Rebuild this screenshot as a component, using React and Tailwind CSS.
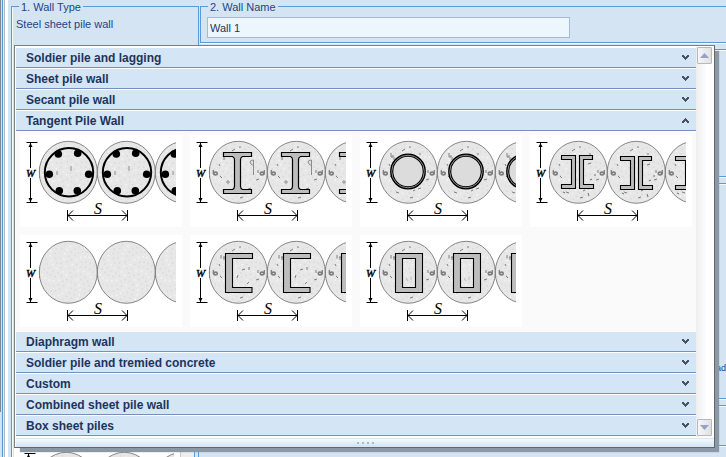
import React from "react";

const SHIFTS = [0, 58, 116];

// Light and dark grains scattered through the concrete.
const GRAINS = Array.from({ length: 110 }, (_, i) => {
  const angle = i * 2.39996;
  const reach = Math.sqrt((i + 0.5) / 110);
  return {
    x: 48 + Math.cos(angle) * reach * 27,
    y: 37 + Math.sin(angle) * reach * 29,
    fill: i % 3 === 0 ? "#d9d9d9" : i % 3 === 1 ? "#f5f5f5" : "#dedbd9",
  };
});

const CHIPS = [
  "M50 13v-2", "M42 16l3-2", "M60 18v2", "M34 22v3", "M66 45l3-1", "M30 41l2 2",
  "M50 63l3-1", "M36 57l3 1", "M58 54l3-1", "M68 35v3", "M29 29l1 2", "M53 56l2-1",
];

function Aggregate() {
  return (
    <g fill="none" stroke="#7d7d7d">
      <path d={CHIPS.join("")} />
      <ellipse cx="25.5" cy="38.5" rx="1.8" ry="1.4" strokeWidth="1.6" />
      <path d="M23.3 35v4.5" strokeWidth="1.3" />
      <ellipse cx="72" cy="38.5" rx="1.8" ry="1.4" strokeWidth="1.6" />
      <path d="M74.3 35v4.5" strokeWidth="1.3" />
    </g>
  );
}

function Rebar() {
  const bars = [[38.3, 19], [57.7, 18.3], [29.3, 39.3], [68.7, 39.3], [39.3, 55.7], [57.3, 55.7]];
  return (
    <g>
      <circle cx="49" cy="37.3" r="24.2" fill="none" stroke="#000" strokeWidth="2" />
      {bars.map(([x, y]) => (
        <circle key={x + "-" + y} cx={x} cy={y} r="3.8" />
      ))}
      <path d="M51 31v5M37 36v4" stroke="#8f8f8f" />
    </g>
  );
}

function Beam() {
  return (
    <g>
      <path
        d="M33.5 17.5h28v4h-9q-2 1-2 3v27q0 2 2 3h9v4h-28v-4h9q2-1 2-3v-27q0-2-2-3h-9z"
        fill="#bdbdbd"
        stroke="#000"
        strokeWidth="1.2"
      />
      <path d="M64 31q-4-2-4-4q0-2 3.5-2v15" fill="none" stroke="#8a8a8a" />
      <circle cx="38" cy="47" r="1.2" fill="none" stroke="#8a8a8a" />
    </g>
  );
}

function Pipe() {
  return (
    <g>
      <circle cx="48" cy="36.5" r="16.3" fill="#dcdcdc" stroke="#000" strokeWidth="3.2" />
      <circle cx="48" cy="36.5" r="16.3" fill="none" stroke="#8c8c8c" />
      <path d="M31 18v4h2v-2" fill="none" stroke="#7d7d7d" />
    </g>
  );
}

function Channel() {
  return (
    <g>
      <path d="M31 20v3.5M34 23v-2" stroke="#7d7d7d" />
      <path d="M35.5 18.5h27v5h-20v29h19.5v5h-26.5z" fill="#bdbdbd" stroke="#000" strokeWidth="1.1" />
      <path d="M52 35l3-1M59 32v3M47 43l1-3M57 49l2-2" stroke="#7d7d7d" />
    </g>
  );
}

function Box() {
  return (
    <g>
      <path d="M31 20v3.5M34 23v-2" stroke="#7d7d7d" />
      <path d="M35.5 18.5h27v39h-27zM42.5 23.5v29h13v-29z" fill="#bdbdbd" stroke="#000" strokeWidth="1.1" />
      <path d="M46 43l2 3M51 42v3" stroke="#bbb" />
    </g>
  );
}

function ChannelPair({ index }) {
  const drop = index === 0 ? 0 : 1;
  return (
    <g transform={`translate(${index === 2 ? -2 : drop} ${drop})`} fill="#bdbdbd" stroke="#000" strokeWidth="1.1">
      <path d="M31.5 20.5h14v33h-14v-4h10v-25h-10z" />
      <path d="M49.5 20.5h13v4h-9v25h10v4h-14z" />
      <path d="M58 29l3-1M60 45l2-1M33 57l2 1M58 58l1 3M65 39v2" fill="none" stroke="#7d7d7d" />
    </g>
  );
}

const SHAPES = { rebar: Rebar, beam: Beam, pipe: Pipe, pair: ChannelPair, channel: Channel, box: Box };

function PileDrawing({ kind, captions = true }) {
  const Shape = SHAPES[kind];
  return (
    <svg viewBox="0 0 162 92" className="block h-[92px] w-[162px] bg-white" role="img" aria-label={`${kind} pile section`}>
      <svg x="0" y="0" width="156" height="92" viewBox="0 0 156 92">
        {SHIFTS.map((shift, index) => (
          <g key={shift} transform={`translate(${shift} 0)`}>
            <ellipse cx="48.3" cy="37.3" rx="29" ry="31" fill="#e7e7e7" />
            {GRAINS.map((g, i) => (
              <rect key={i} x={g.x} y={g.y} width="1.5" height="1.5" fill={g.fill} />
            ))}
            <ellipse cx="48.3" cy="37.3" rx="29" ry="31" fill="none" stroke="#858585" />
            <path d="M19.5 32v11M77.5 32v11" stroke="#858585" />
            {Shape && kind !== "rebar" && <Aggregate />}
            {Shape && <Shape index={index} />}
          </g>
        ))}
      </svg>
      <g fill="none" stroke="#000">
        <path d="M6.5 7.5h11M6.5 67.5h11M10.5 8v25M10.5 43v24" />
        <path d="M47.5 75v11M107.5 75v11M48 80.5h59M53 75.5l-5 5l5 5M102 75.5l5 5l-5 5" />
      </g>
      <path d="M10.5 8l2 4h-4zM10.5 67l2-4h-4z" />
      {captions && (
        <g className="font-['Liberation_Serif',serif] italic">
          <text x="6" y="42" fontSize="11" stroke="#000" strokeWidth="0.4">W</text>
          <text x="74" y="79" fontSize="16">S</text>
        </g>
      )}
    </svg>
  );
}

function Chevron({ up }) {
  return (
    <svg viewBox="0 0 7 5" className="h-[5px] w-[7px]" shapeRendering="crispEdges" aria-hidden="true">
      <path
        d="M0 0h2v1h1v1h1v-1h1v-1h2v2h-1v1h-1v1h-1v1h-1v-1h-1v-1h-1v-1h-1z"
        fill="#4b5360"
        transform={up ? "matrix(1 0 0 -1 0 5)" : undefined}
      />
    </svg>
  );
}

function SectionHeader({ title, open = false }) {
  return (
    <button
      type="button"
      aria-expanded={open}
      className="mb-px flex h-5 w-full shrink-0 items-center justify-between border-b border-[#7590b9] bg-[#d4e5f5] pr-[7px] pl-[10px] text-left font-bold text-[#1d355c]"
    >
      <span>{title}</span>
      <Chevron up={open} />
    </button>
  );
}

function ScrollButton({ up = false }) {
  return (
    <button
      type="button"
      aria-label={up ? "Scroll up" : "Scroll down"}
      className="flex h-[17px] w-[15px] items-center justify-center rounded-[1px] border border-[#b5b8bd] bg-linear-to-r from-[#f6f6f6] to-[#dfe1e4]"
    >
      <svg viewBox="0 0 9 5" className="h-[5px] w-[9px]" aria-hidden="true">
        <path d={up ? "M0 5L4.5 0L9 5z" : "M0 0L4.5 5L9 0z"} fill="#94a2c9" />
      </svg>
    </button>
  );
}

const BEFORE = ["Soldier pile and lagging", "Sheet pile wall", "Secant pile wall"];
const AFTER = ["Diaphragm wall", "Soldier pile and tremied concrete", "Custom", "Combined sheet pile wall", "Box sheet piles"];
const PILES = ["rebar", "beam", "pipe", "pair", "plain", "channel", "box"];

function WallTypeMenu() {
  return (
    <div className="absolute top-[45px] right-[11px] left-[14px] border border-[#7b7f86] border-r-[#666] border-b-[#666] bg-white pt-[2px] pl-px shadow-[5px_5px_1px_-1px_#8b98a5]">
      <div className="flex">
        <div className="min-w-0 flex-1">
          {BEFORE.map((title) => (
            <SectionHeader key={title} title={title} />
          ))}
          <SectionHeader title="Tangent Pile Wall" open />
          <div className="flex flex-wrap gap-2 bg-[#fafafa] px-1 pt-[3px] pb-[5px]">
            {PILES.map((kind) => (
              <button key={kind} type="button" className="block">
                <PileDrawing kind={kind} />
              </button>
            ))}
          </div>
          {AFTER.map((title) => (
            <SectionHeader key={title} title={title} />
          ))}
        </div>
        <div className="-mt-px flex w-[18px] flex-col justify-between bg-linear-to-r from-[#eeeeee] to-white to-60% pr-[2px] pb-px pl-px">
          <ScrollButton up />
          <ScrollButton />
        </div>
      </div>
      <div className="mt-px flex h-[9px] items-center justify-center gap-[3px] border-t border-[#dfe5ea] bg-linear-to-b from-[#f3f9fe] to-[#cfe4f5]">
        {[0, 1, 2, 3].map((dot) => (
          <span key={dot} className="size-[2px] bg-[#a9bacb]" />
        ))}
      </div>
    </div>
  );
}

function Panel({ className, children }) {
  return (
    <section className={`border-y border-l border-[#5b9bd5] shadow-[0_1px_0_#f4f9fd,inset_1px_1px_0_#f4f9fd] ${className}`}>
      {children}
    </section>
  );
}

export default function App() {
  return (
    <main className="relative flex h-screen overflow-hidden bg-[#d5e4f2] font-['Liberation_Sans',Arial,sans-serif] text-[12px] leading-4 text-[#1b4488]">
      <div className="flex w-[11px] shrink-0" aria-hidden="true">
        <div className="mb-[45px] w-px bg-[#85888f]" />
        <div className="w-px bg-[#c9dff3]" />
        <div className="w-px bg-[#5b9bd5]" />
        <div className="w-px bg-[#dcebf7]" />
        <div className="w-px bg-[#b4b9be]" />
        <div className="w-[3px] bg-white" />
      </div>

      <fieldset className="-mt-px -mb-2 flex w-[188px] shrink-0 flex-col border border-[#5b9bd5] shadow-[inset_1px_0_0_#f4f9fd]">
        <legend className="ml-[7px] px-[2px] pt-[2px] text-[11px] leading-3">1. Wall Type</legend>
        <div className="flex h-full flex-col justify-between">
          <p className="pt-[3px] pl-1 text-[11px]">Steel sheet pile wall</p>
          <div className="mr-[3px] mb-[7px] ml-[2px] flex h-[11px] overflow-hidden border-r border-[#5b9bd5] bg-white">
            <div className="w-[166px] shrink-0 overflow-hidden pl-1">
              <PileDrawing kind="plain" captions={false} />
            </div>
            <div className="flex-1 border-l border-[#c8c8c8] bg-[#eeeeee]" />
          </div>
        </div>
      </fieldset>

      <div className="ml-px flex min-w-0 flex-1 flex-col">
        <fieldset className="-mt-px h-11 shrink-0 border border-r-0 border-[#5b9bd5] shadow-[0_1px_0_#f4f9fd]">
          <legend className="ml-[7px] px-[2px] pt-[2px] text-[11px] leading-3">
            <label htmlFor="wall-name">2. Wall Name</label>
          </legend>
          <input
            id="wall-name"
            type="text"
            defaultValue="Wall 1"
            className="mt-1 ml-[6px] block h-[21px] w-1/2 min-w-[363px] border border-[#a9b9d4] bg-[#edf5fd] px-[2px] text-[11px] text-[#1d355c]"
          />
        </fieldset>
        <div className="mt-[6px] flex flex-col gap-[6px]">
          <Panel className="h-32" />
          <Panel className="flex h-[216px] items-end justify-end pb-[22px]">
            <span className="text-[9px]">rad</span>
          </Panel>
          <Panel className="h-[41px]" />
        </div>
      </div>

      <WallTypeMenu />
    </main>
  );
}
